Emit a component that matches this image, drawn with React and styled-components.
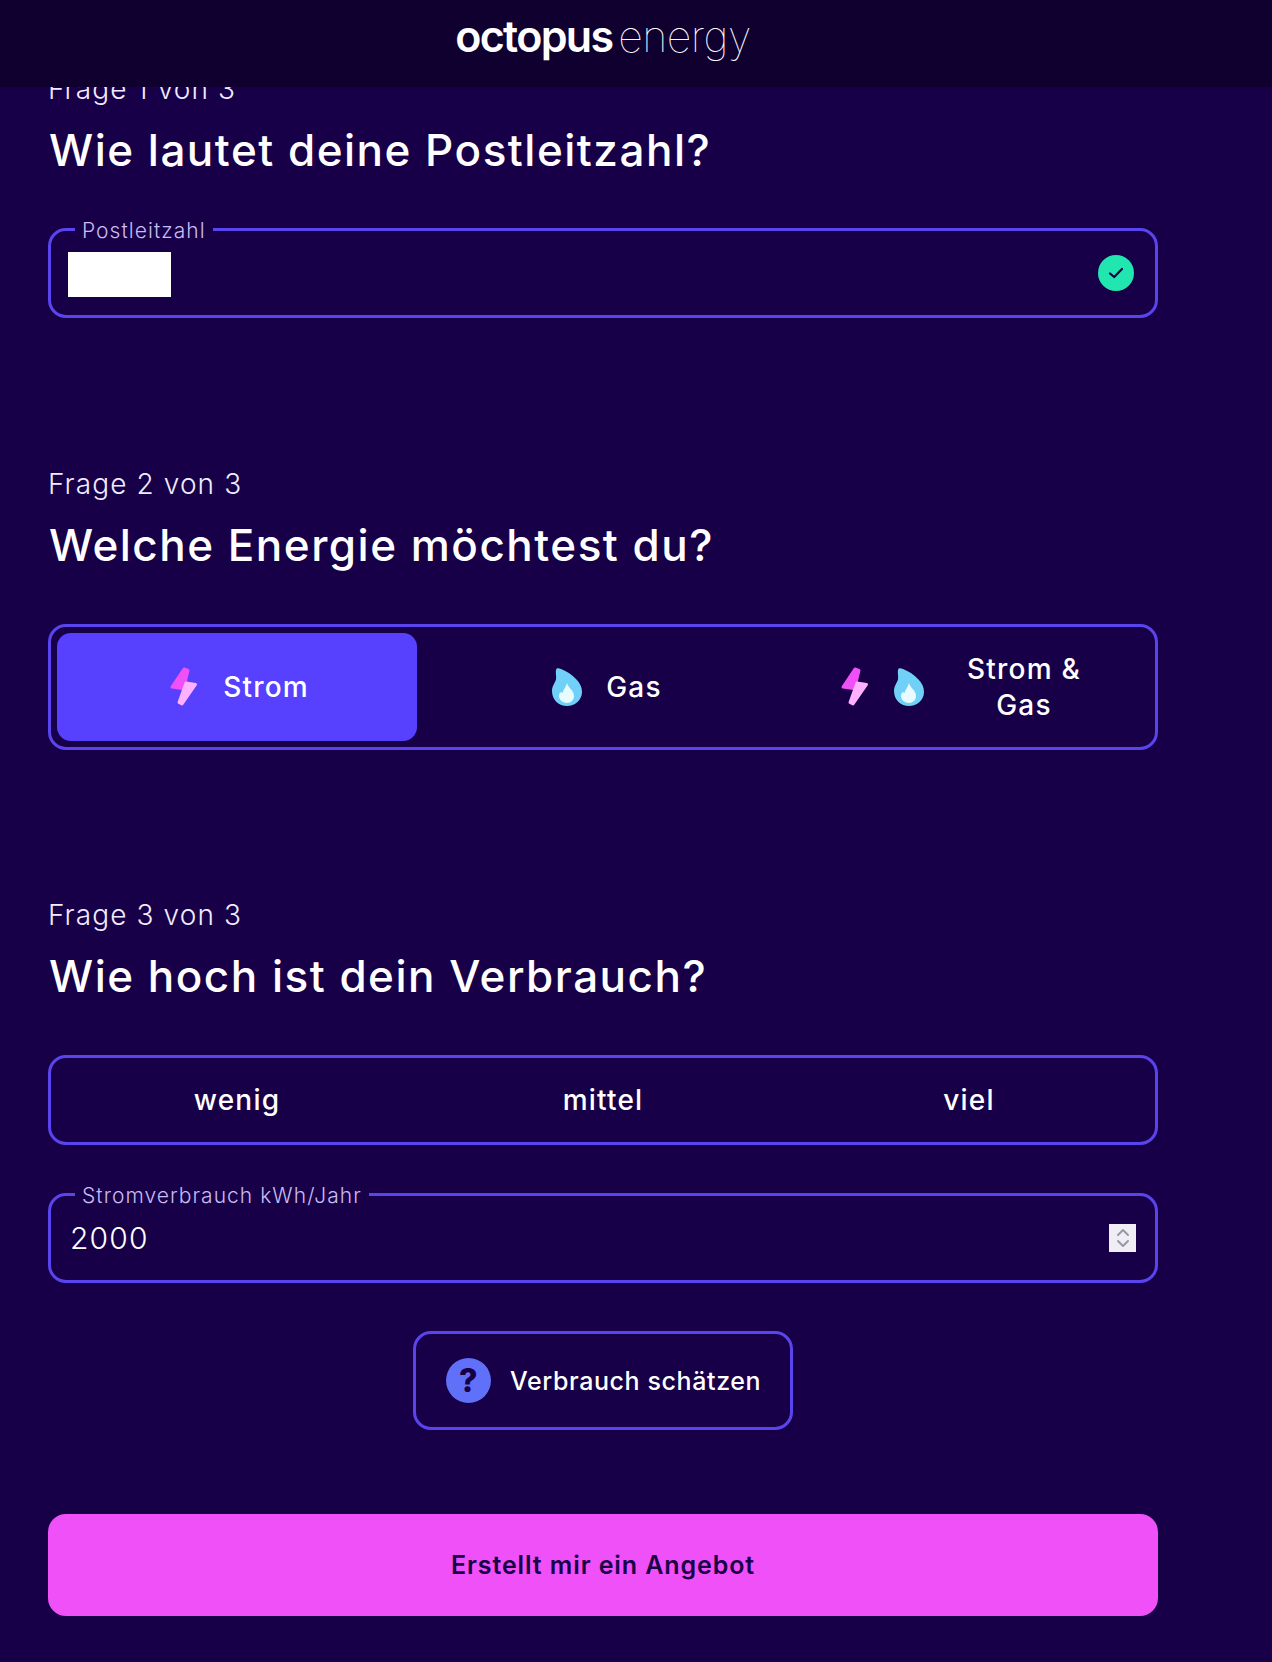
import React from "react";
import styled, { createGlobalStyle } from "styled-components";

const GlobalStyle = createGlobalStyle`
  html, body {
    margin: 0;
    padding: 0;
    background: #180048;
  }
  body {
    font-family: "Inter", "Liberation Sans", sans-serif;
    color: #ffffff;
  }
`;

const BoltIcon = () => (
  <svg width="30" height="42" viewBox="0 0 30 42" aria-hidden="true">
    <path d="M15 3 L19 4.5 L16 17 L17 23 L3 21 Z" fill="#f050f8" stroke="#f050f8" strokeWidth="3" strokeLinejoin="round" />
    <path d="M17 17 L26.5 18.5 L13 38 L10 36.5 Z" fill="#ffb0ff" stroke="#ffb0ff" strokeWidth="3" strokeLinejoin="round" />
  </svg>
);

const FlameIcon = () => (
  <svg width="30" height="38" viewBox="0 0 30 38" aria-hidden="true">
    <path
      d="M4.5 0.8 C5.5 0.2 7 0.2 9 1 C15 3.5 20 6.5 24 11 C28 15 30 19 30 24 C30 32 23 38 15 38 C7 38 0 32 0 23 C0 18 3 15 4 11.5 C4.6 8 3 3 4.5 0.8 Z"
      fill="#70d0f8"
    />
    <path
      d="M15 15 C16 20 22 22 22 28 C22 32 19 35 15 35 C11 35 7 32 7 28 C7 25 9 23 10.5 25 C11 22 14 19 15 15 Z"
      fill="#e8fbff"
    />
  </svg>
);

const App = () => (
  <Page>
    <GlobalStyle />
    <Header>
      <Logo>
        <LogoBold>octopus</LogoBold>
        <LogoThin>energy</LogoThin>
      </Logo>
    </Header>
    <Main>
      <Section>
        <StepLabel>Frage 1 von 3</StepLabel>
        <Question>Wie lautet deine Postleitzahl?</Question>
        <Field>
          <FieldLabel>Postleitzahl</FieldLabel>
          <FieldRow>
            <Redacted />
            <CheckBadge>
              <svg width="18" height="18" viewBox="0 0 18 18" fill="none" aria-hidden="true">
                <path d="M3 9.5 L7.2 13 L15 5" stroke="#180048" strokeWidth="2.2" strokeLinecap="round" strokeLinejoin="round" />
              </svg>
            </CheckBadge>
          </FieldRow>
        </Field>
      </Section>

      <Section $gap={147}>
        <StepLabel>Frage 2 von 3</StepLabel>
        <Question>Welche Energie möchtest du?</Question>
        <Segments $tall>
          <Option $active>
            <LeadIcon $shift={4}>
              <BoltIcon />
            </LeadIcon>
            <span>Strom</span>
          </Option>
          <Option>
            <LeadIcon $shift={8}>
              <FlameIcon />
            </LeadIcon>
            <span>Gas</span>
          </Option>
          <Option>
            <IconPair>
              <BoltIcon />
              <FlameIcon />
            </IconPair>
            <WrappedText>Strom &amp; Gas</WrappedText>
          </Option>
        </Segments>
      </Section>

      <Section>
        <StepLabel>Frage 3 von 3</StepLabel>
        <Question>Wie hoch ist dein Verbrauch?</Question>
        <Segments>
          <Option>wenig</Option>
          <Option>mittel</Option>
          <Option>viel</Option>
        </Segments>
        <NumberField>
          <FieldLabel>Stromverbrauch kWh/Jahr</FieldLabel>
          <FieldRow>
            <NumberValue>2000</NumberValue>
            <Spinner>
              <svg width="14" height="24" viewBox="0 0 14 24" fill="none" aria-hidden="true">
                <path d="M2 9 L7 4 L12 9 M2 15 L7 20 L12 15" stroke="#9a98a8" strokeWidth="2" strokeLinecap="round" strokeLinejoin="round" />
              </svg>
            </Spinner>
          </FieldRow>
        </NumberField>
        <EstimateButton type="button">
          <HelpCircle>?</HelpCircle>
          Verbrauch schätzen
        </EstimateButton>
        <SubmitButton type="button">Erstellt mir ein Angebot</SubmitButton>
      </Section>
    </Main>
  </Page>
);

export default App;

const Page = styled.div`
  width: 1272px;
  height: 1662px;
  overflow: hidden;
  position: relative;
  background: #180048;
`;

const Header = styled.header`
  position: absolute;
  top: 0;
  left: 0;
  right: 0;
  height: 87px;
  padding-right: 66px;
  background: #100030;
  display: flex;
  justify-content: center;
  z-index: 2;
`;

const Logo = styled.div`
  display: flex;
  align-items: baseline;
  height: 60px;
  margin-top: 6px;
  line-height: 60px;
  font-size: 43px;
  color: #ffffff;
`;

const LogoBold = styled.span`
  font-weight: 600;
  letter-spacing: -1.7px;
  margin-right: 6px;
`;

const LogoThin = styled.span`
  font-weight: 100;
  letter-spacing: -0.6px;
`;

const Main = styled.main`
  width: 1110px;
  padding: 71px 0 0 48px;
`;

const Section = styled.section`
  display: flex;
  flex-direction: column;
  margin-bottom: ${(props) => props.$gap || 148}px;
`;

const StepLabel = styled.div`
  font-size: 28px;
  line-height: 36px;
  font-weight: 300;
  letter-spacing: 1.1px;
  color: #f0ecff;
`;

const Question = styled.h2`
  margin: 15px 0 51px 1px;
  font-size: 44px;
  line-height: 56px;
  font-weight: 500;
  letter-spacing: 1.5px;
  color: #ffffff;
`;

const Field = styled.fieldset`
  margin: -14px 0 0;
  padding: 0 19px;
  min-width: 0;
  height: 103px;
  box-sizing: border-box;
  border: 3px solid #5a44ee;
  border-radius: 18px;
`;

const NumberField = styled(Field)`
  margin-top: 35px;
`;

const FieldLabel = styled.legend`
  margin-left: 5px;
  padding: 4px 7px 0;
  font-size: 21px;
  line-height: 24px;
  font-weight: 300;
  letter-spacing: 1.05px;
  color: #c8bcf4;
`;

const FieldRow = styled.div`
  display: flex;
  align-items: center;
  justify-content: space-between;
  height: 60px;
`;

const Redacted = styled.div`
  width: 103px;
  height: 45px;
  margin: 2px 0 0 -2px;
  background: #ffffff;
`;

const CheckBadge = styled.div`
  width: 36px;
  height: 36px;
  margin-right: 2px;
  border-radius: 50%;
  background: #22e6b0;
  display: flex;
  align-items: center;
  justify-content: center;
`;

const NumberValue = styled.div`
  font-size: 30px;
  font-weight: 300;
  letter-spacing: 1.2px;
  color: #ffffff;
`;

const Spinner = styled.div`
  width: 27px;
  height: 28px;
  background: #efeef4;
  display: flex;
  align-items: center;
  justify-content: center;
`;

const Segments = styled.div`
  display: grid;
  grid-template-columns: repeat(3, 360px);
  gap: 6px;
  padding: 6px;
  height: ${(props) => (props.$tall ? "126px" : "90px")};
  box-sizing: border-box;
  border: 3px solid #5a44ee;
  border-radius: 18px;
`;

const Option = styled.div`
  display: flex;
  align-items: center;
  justify-content: center;
  gap: 24px;
  border-radius: 14px;
  background: ${(props) => (props.$active ? "#5840ff" : "transparent")};
  font-size: 28px;
  line-height: 36px;
  font-weight: 500;
  letter-spacing: 1.2px;
  color: #ffffff;
`;

const LeadIcon = styled.span`
  display: flex;
  margin-left: ${(props) => props.$shift}px;
`;

const IconPair = styled.div`
  display: flex;
  align-items: center;
  gap: 24px;
`;

const WrappedText = styled.span`
  width: 140px;
  margin: 0 4px 0 6px;
  text-align: center;
`;

const EstimateButton = styled.button`
  align-self: center;
  display: flex;
  align-items: center;
  gap: 19px;
  width: 380px;
  height: 99px;
  margin-top: 48px;
  padding: 0 0 0 30px;
  box-sizing: border-box;
  background: transparent;
  border: 3px solid #5a44ee;
  border-radius: 18px;
  font-family: inherit;
  font-size: 25px;
  font-weight: 500;
  letter-spacing: 0.6px;
  color: #ffffff;
`;

const HelpCircle = styled.span`
  width: 45px;
  height: 45px;
  border-radius: 50%;
  background: #6070f8;
  display: flex;
  align-items: center;
  justify-content: center;
  font-size: 32px;
  font-weight: 800;
  color: #180048;
`;

const SubmitButton = styled.button`
  width: 100%;
  height: 102px;
  margin-top: 84px;
  background: #f050f8;
  border: 0;
  border-radius: 18px;
  font-family: inherit;
  font-size: 25px;
  font-weight: 600;
  letter-spacing: 0.9px;
  color: #180048;
`;
